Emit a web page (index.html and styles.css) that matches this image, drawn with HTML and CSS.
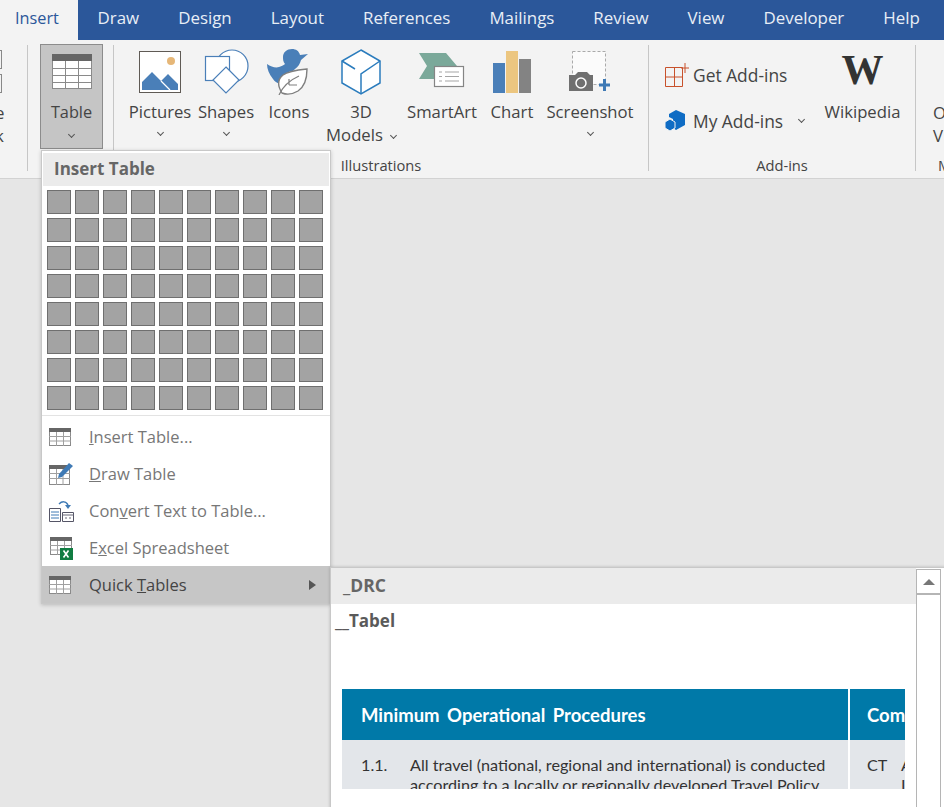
FILE: index.html
```html
<!DOCTYPE html>
<html lang="en">
<head>
    <title>Insert Table</title>
    <meta charset="utf-8" />
    <link rel="stylesheet" href="styles.css">
</head>
<body>
<div class="app">
    <ul class="tabs">
        <li class="cur">Insert</li>
        <li>Draw</li>
        <li>Design</li>
        <li>Layout</li>
        <li>References</li>
        <li>Mailings</li>
        <li>Review</li>
        <li>View</li>
        <li>Developer</li>
        <li>Help</li>
    </ul>

    <div class="ribbon">
        <div class="group g0">
            <div class="frag-icons"><i></i><i></i></div>
            <p class="frag-text">e<br>k</p>
        </div>

        <div class="group g1">
            <div class="btn btn-on">
                <svg width="40" height="40" viewBox="0 0 40 40"><rect x=".5" y=".5" width="39" height="34" fill="#fff" stroke="#8a8a8a"/><rect x="0" y="0" width="40" height="7" fill="#666"/><path d="M0 14.5h40M0 21.5h40M0 28.5h40M13.5 7v28M26.5 7v28" stroke="#8a8a8a" fill="none"/></svg>
                <span class="lb">Table</span>
                <span class="chev"></span>
            </div>
        </div>

        <div class="group g2">
            <div class="row">
                <div class="btn w66">
                    <svg width="42" height="42" viewBox="0 0 42 42"><rect x=".5" y=".5" width="41" height="41" fill="#fff" stroke="#5f5a55"/><circle cx="32" cy="10" r="4" fill="#e6b778"/><path d="M3 39V31L13 21 22 30 29 23 39 33V39z" fill="#4a7fb8"/><path d="M22 30l9 9" stroke="#fff" stroke-width="1.2"/></svg>
                    <span class="lb">Pictures</span>
                    <span class="chev"></span>
                </div>
                <div class="btn w66">
                    <svg width="46" height="46" viewBox="0 0 46 46"><circle cx="29" cy="17" r="16" fill="#fff" stroke="#4a7fb8" stroke-width="1.2"/><rect x="2.5" y="7.5" width="24" height="24" fill="#fff" stroke="#4a7fb8" stroke-width="1.2"/><path d="M23 18l13 13-13 13-13-13z" fill="#fff" stroke="#4a7fb8" stroke-width="1.2"/></svg>
                    <span class="lb">Shapes</span>
                    <span class="chev"></span>
                </div>
                <div class="btn w60">
                    <svg width="44" height="46" viewBox="0 0 44 46"><path d="M0 15c4 3 9 4 12 3 3-1 5-2 6-3-2-2-2-5-2-7 0-5 4-8 9-8 4 0 7 2 8 6l8-1-7 6c-1 4-3 7-6 9L14 34c-3 1-6-1-8-4C2 25 0 20 0 15z" fill="#4a7fb8"/><path d="M15 44c-5-8-4-14 1-18 5-4 14-5 24-6 0 10-3 18-9 22-5 3-11 4-16 2z" fill="#fff" stroke="#7f7f7f" stroke-width="1.4"/><path d="M12 46c4-9 11-15 20-19M22 36v-6M22 36h8" fill="none" stroke="#7f7f7f" stroke-width="1.2"/></svg>
                    <span class="lb">Icons</span>
                </div>
                <div class="btn w84">
                    <svg width="42" height="46" viewBox="0 0 42 46"><path d="M21 1l19 11v22L21 45 2 34V12z" fill="#fff" stroke="#2b7cbd" stroke-width="1.5"/><path d="M2 12l13 8M40 12L21 25v20" fill="none" stroke="#2b7cbd" stroke-width="1.5"/></svg>
                    <span class="lb">3D<br>Models<span class="chev chev-in"></span></span>
                </div>
                <div class="btn w78">
                    <svg width="46" height="38" viewBox="0 0 46 38"><path d="M0 0h27l11 13v13H27L0 26 8 13z" fill="#7ba99a"/><rect x="15.500" y="13.500" width="29" height="20" fill="#fff" stroke="#858585" stroke-width="1.2"/><path d="M20 19h3M26 19h14M20 23.500h3M26 23.500h14M20 28h3M26 28h14" stroke="#a5a5a5"/></svg>
                    <span class="lb">SmartArt</span>
                </div>
                <div class="btn w62">
                    <svg width="38" height="42" viewBox="0 0 38 42"><rect x="0" y="12" width="12" height="30" fill="#4a7fb8"/><rect x="13" y="0" width="12" height="42" fill="#ecc680"/><rect x="26" y="8" width="12" height="34" fill="#838383"/></svg>
                    <span class="lb">Chart</span>
                </div>
                <div class="btn w94">
                    <svg width="42" height="42" viewBox="0 0 42 42"><rect x="3.500" y=".5" width="33" height="33" fill="#fbfbfb" stroke="#aaa" stroke-dasharray="3 2"/><path d="M0 24h6l3-3h9l3 3h3v16H0z" fill="#707070"/><circle cx="12" cy="32" r="5" fill="#707070" stroke="#fff" stroke-width="1.500"/><path d="M30 34h11M35.500 28v12" stroke="#3f7ab5" stroke-width="3"/></svg>
                    <span class="lb">Screenshot</span>
                    <span class="chev"></span>
                </div>
            </div>
            <div class="g-name">Illustrations</div>
        </div>

        <div class="group g3">
            <div class="row">
                <div class="addins">
                    <div class="ai-row">
                        <svg width="24" height="24" viewBox="0 0 24 24"><path d="M.5 4.500h17v19H.5zM.5 14h17M9.500 4.500v19" fill="none" stroke="#c8512b"/><path d="M16 5h8M20 0v10" stroke="#c8512b" fill="none"/></svg>
                        <span>Get Add-ins</span>
                    </div>
                    <div class="ai-row">
                        <svg width="22" height="22" viewBox="0 0 22 22"><path d="M11 0l9 4v11l-9 5-3-2V9L4 7V4z" fill="#0f6cc4"/><path d="M5 9l5 3v6l-5 3-5-3v-6z" fill="#0f6cc4" stroke="#f3f3f3"/></svg>
                        <span>My Add-ins</span>
                        <span class="chev chev-ai"></span>
                    </div>
                </div>
                <div class="btn wiki">
                    <div class="wiki-w">W</div>
                    <span class="lb">Wikipedia</span>
                </div>
            </div>
            <div class="g-name">Add-ins</div>
        </div>

        <div class="group g4">
            <p class="frag-lb">O<br>V</p>
            <div class="g-name g-name-l">M</div>
        </div>
    </div>

    <div class="doc"></div>

    <div class="menu">
        <div class="menu-hd">Insert Table</div>
        <div class="cells" id="cells"></div>
        <ul class="items">
            <li>
                <span class="ico"><svg width="24" height="20" viewBox="0 0 24 20"><rect x="1.500" y="2.500" width="21" height="16" fill="#fff" stroke="#8a8a8a"/><rect x="1" y="1" width="22" height="4" fill="#666"/><path d="M1 9.500h22M1 14h22M8.500 5v14M15.500 5v14" stroke="#a0a0a0"/></svg></span>
                <span><u>I</u>nsert Table...</span>
            </li>
            <li>
                <span class="ico"><svg width="26" height="24" viewBox="0 0 26 24"><rect x="1.500" y="4.500" width="20" height="18" fill="#fff" stroke="#8a8a8a"/><rect x="1" y="3" width="21" height="4" fill="#666"/><path d="M1 11.500h21M1 16.500h21M8.500 7v16M15 7v16" stroke="#a0a0a0"/><path d="M10 16l1-4L21 1l4 3-11 11z" fill="#3f7ab5"/></svg></span>
                <span><u>D</u>raw Table</span>
            </li>
            <li>
                <span class="ico"><svg width="26" height="22" viewBox="0 0 26 22"><path d="M1.500 8.500h11v13h-11z" fill="#fff" stroke="#556"/><path d="M3 12h8M3 15h8M3 18h8" stroke="#3f7ab5"/><path d="M14.500 12.500h11v9h-11z" fill="#fff" stroke="#556"/><path d="M14 15h12M17 18h2M21 18h2" stroke="#667"/><path d="M11 4c3-3 7-3 9 1" fill="none" stroke="#3f7ab5" stroke-width="1.500"/><path d="M17 5h6l-3 4z" fill="#3f7ab5"/></svg></span>
                <span>Con<u>v</u>ert Text to Table...</span>
            </li>
            <li>
                <span class="ico"><svg width="26" height="24" viewBox="0 0 26 24"><rect x="2.500" y="2.500" width="21" height="16" fill="#fff" stroke="#8a8a8a"/><rect x="2" y="1" width="22" height="4" fill="#666"/><path d="M2 9.500h22M2 14h22M9.500 5v14M16.500 5v14" stroke="#a0a0a0"/><rect x="12" y="12" width="13" height="12" fill="#107c41"/><path d="M15.500 14.500l5 7M20.500 14.500l-5 7" stroke="#fff" stroke-width="1.600"/></svg></span>
                <span>E<u>x</u>cel Spreadsheet</span>
            </li>
            <li class="hot">
                <span class="ico"><svg width="24" height="20" viewBox="0 0 24 20"><rect x="1.500" y="2.500" width="21" height="16" fill="#fff" stroke="#8a8a8a"/><rect x="1" y="1" width="22" height="4" fill="#666"/><path d="M1 9.500h22M1 14h22M8.500 5v14M15.500 5v14" stroke="#a0a0a0"/></svg></span>
                <span>Quick <u>T</u>ables</span>
                <span class="arrow"></span>
            </li>
        </ul>
    </div>

    <div class="sub">
        <div class="sub-main">
            <div class="sub-hd">_DRC</div>
            <div class="sub-name">__Tabel</div>
            <div class="tb">
                <div class="tb-head">
                    <div class="c1">Minimum Operational Procedures</div>
                    <div class="c2">Com</div>
                </div>
                <div class="tb-body">
                    <div class="c1 c1-body">
                        <span class="num">1.1.</span>
                        <span>All travel (national, regional and international) is conducted according to a locally or regionally developed Travel Policy</span>
                    </div>
                    <div class="c2 c2-body"><span class="ct">CT</span><span>A<br>I</span></div>
                </div>
            </div>
        </div>
        <div class="scroll">
            <div class="up"></div>
        </div>
    </div>
</div>

<script>
    (function(){
        var o = document.getElementById("cells"), s = "";
        for(var i = 0; i < 80; i++){
            s += "<i></i>";
        }
        o.innerHTML = s;
    })();
</script>
</body>
</html>
```

FILE: styles.css
```css
*{margin:0;padding:0;box-sizing:border-box;}
li{list-style-type:none;}
body,html{width:100%;height:100%;overflow:hidden;}
body{font-family:"Open Sans","Noto Sans",sans-serif;color:#444;background:#e6e6e6;}

.app{width:944px;height:807px;position:relative;overflow:hidden;display:flex;flex-direction:column;}

.tabs{display:flex;height:40px;background:#2b579a;color:#e8eef6;font-size:16.900px;flex:none;white-space:nowrap;}
.tabs li{padding:0 19.500px;line-height:36px;}
.tabs li:first-child{padding:0 15px;width:78px;font-size:16.300px;}
.tabs .cur{background:#f3f3f3;color:#2b579a;}

.ribbon{display:flex;height:139px;background:#f3f3f3;border-bottom:1px solid #d2d2d2;flex:none;overflow:hidden;}
.group{position:relative;height:126px;margin-top:5px;border-right:1px solid #c6c6c6;display:flex;flex-direction:column;flex:none;}
.g0{width:28px;}
.g1{width:86px;padding-left:12px;}
.g2{width:535px;padding-left:13px;}
.g3{width:267px;padding-left:16px;}
.g4{flex:1;border-right:none;padding-left:17px;}
.row{display:flex;flex:1;}

.frag-icons{height:50px;}
.frag-icons i{display:block;width:2px;height:19px;border:1px solid #888;border-left:none;margin-top:5px;}
.frag-text{font-size:16.800px;line-height:23px;margin-top:6px;margin-left:-5px;}
.frag-lb{font-size:16.800px;line-height:23px;margin-top:56px;}

.btn{display:flex;flex-direction:column;align-items:center;height:105px;padding-top:4px;font-size:16.700px;line-height:23px;text-align:center;}
.btn svg{height:46px;flex:none;margin-bottom:5px;}
.btn-on{width:63px;margin-top:-1px;padding-top:9px;background:#c5c5c5;border:1px solid #8c8c8c;font-size:16.300px;}
.btn-on svg{height:40px;margin-bottom:7px;}
.btn-on .chev{margin-top:8px;}
.lb{display:block;white-space:nowrap;}
.w60{width:60px;}
.w62{width:62px;}
.w66{width:66px;}
.w78{width:78px;}
.w84{width:84px;}
.w94{width:94px;}

.chev{display:block;width:5px;height:5px;border-right:1px solid #555;border-bottom:1px solid #555;transform:rotate(45deg);margin-top:7px;}
.chev-in{display:inline-block;margin:0 0 3px 8px;}
.chev-ai{margin:0 0 4px 16px;}

.g-name{position:absolute;left:0;right:0;bottom:-4px;text-align:center;font-size:14.700px;line-height:20px;}
.g-name-l{text-align:left;left:22px;}

.addins{width:158px;padding-top:18px;}
.ai-row{display:flex;align-items:center;height:24px;margin-bottom:22px;font-size:17.400px;}
.ai-row svg{margin-right:4px;flex:none;}
.ai-row:last-child svg{margin-right:6px;}
.wiki{width:79px;}
.wiki-w{font:bold 42px/46px "Liberation Serif",serif;color:#333;height:46px;margin-top:-2px;margin-bottom:7px;}

.doc{flex:1;background:#e6e6e6;}

.menu{position:absolute;left:41px;top:150px;width:290px;height:454px;background:#fff;border:1px solid #c8c8c8;box-shadow:0 1px 4px rgba(0,0,0,.2);padding-top:2px;}
.menu-hd{height:33px;margin:0 1px;background:#ebebeb;font-weight:bold;font-size:17px;line-height:32px;padding-left:11px;color:#666;}
.cells{display:grid;grid-template-columns:repeat(10,24px);grid-auto-rows:24px;gap:4px;padding:4px 0 6px 5px;border-bottom:1px solid #e3e3e3;height:230px;}
.cells i{display:block;background:#a3a3a3;border:1px solid #6f6f6f;}
.items{padding-top:2px;}
.items li{display:flex;align-items:center;height:37px;font-size:16.500px;color:#777;}
.items .hot{background:#c6c6c6;color:#444;}
.ico{width:47px;padding-left:6px;display:flex;flex:none;}
.arrow{width:0;height:0;margin-left:auto;margin-right:14px;border-left:7px solid #555;border-top:5px solid transparent;border-bottom:5px solid transparent;}

.sub{position:absolute;left:330px;top:567px;width:616px;height:242px;background:#fff;border:1px solid #c8c8c8;box-shadow:0 0 3px rgba(0,0,0,.2);display:flex;}
.sub-main{width:585px;flex:none;}
.sub-hd{height:36px;background:#ebebeb;font-weight:bold;font-size:17.500px;line-height:34px;padding-left:12px;color:#666;}
.sub-name{font-weight:bold;font-size:17px;line-height:34px;padding-left:4px;color:#5a5a5a;margin-bottom:51px;}
.tb{width:563px;margin-left:11px;height:100px;overflow:hidden;font-family:Lato,"Open Sans",sans-serif;}
.tb-head{display:flex;height:51px;background:#0079a8;color:#fff;font-weight:bold;font-size:18.500px;word-spacing:3px;line-height:52px;}
.tb-body{display:flex;height:49px;background:#e3e6ea;color:#333;font-size:16.200px;line-height:20px;}
.c1{width:508px;padding-left:19px;border-right:2px solid #fff;flex:none;}
.c2{flex:1;padding-left:17px;overflow:hidden;white-space:nowrap;}
.c1-body{display:flex;padding-top:15px;padding-right:20px;}
.num{width:49px;flex:none;}
.c2-body{display:flex;padding-top:15px;}
.ct{width:34px;flex:none;}

.scroll{width:25px;margin-top:1px;border:1px solid #b5b5b5;background:#fff;}
.up{height:25px;border-bottom:2px solid #b5b5b5;display:flex;align-items:center;justify-content:center;}
.up:after{content:"";border-left:6px solid transparent;border-right:6px solid transparent;border-bottom:6px solid #777;}
```
